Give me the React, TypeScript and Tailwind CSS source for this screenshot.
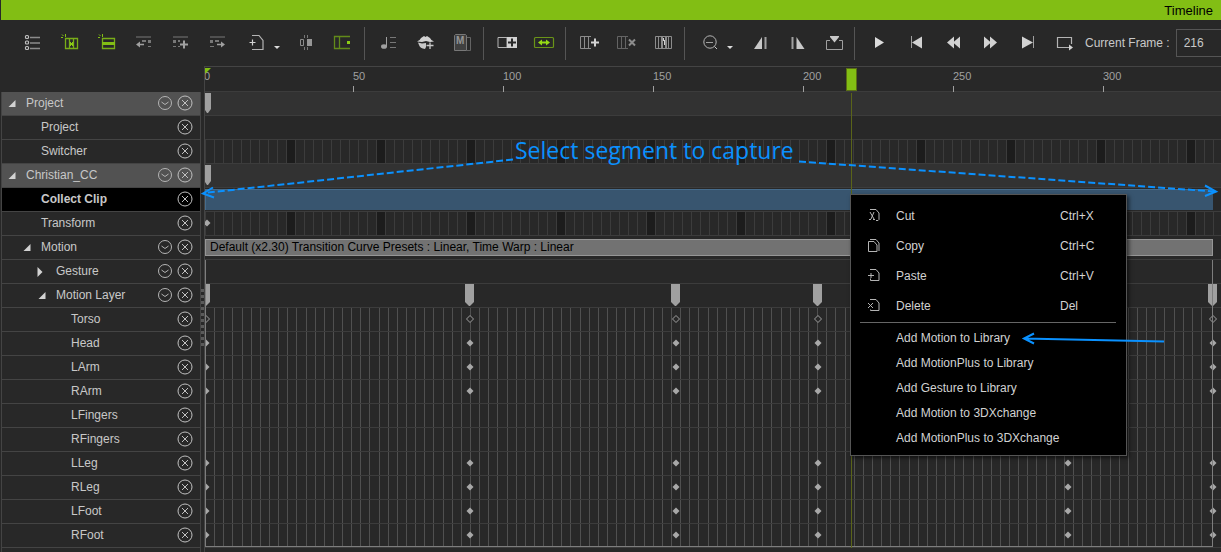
import { useState } from 'react';
import type { ReactNode } from 'react';

type TrackKind = 'header' | 'empty' | 'cells' | 'clip' | 'bar' | 'pins' | 'keys';

interface TrackRow {
  label: string;
  depth: number;
  kind: TrackKind;
  caret?: 'open' | 'closed';
  expandable?: boolean;
  selected?: boolean;
  keys?: number[];
  hollow?: boolean;
}

// Pixel offsets of the keyframes from the start of the track
const ARM_KEYS = [1, 265, 471, 613, 1008];
const LEG_KEYS = [1, 265, 471, 613, 863, 1008];

const ROWS: TrackRow[] = [
  { label: 'Project', depth: 0, kind: 'header', caret: 'open', expandable: true },
  { label: 'Project', depth: 1, kind: 'empty' },
  { label: 'Switcher', depth: 1, kind: 'cells' },
  { label: 'Christian_CC', depth: 0, kind: 'header', caret: 'open', expandable: true },
  { label: 'Collect Clip', depth: 1, kind: 'clip', selected: true },
  { label: 'Transform', depth: 1, kind: 'cells', keys: [2] },
  { label: 'Motion', depth: 1, kind: 'bar', caret: 'open', expandable: true },
  { label: 'Gesture', depth: 2, kind: 'empty', caret: 'closed', expandable: true },
  { label: 'Motion Layer', depth: 2, kind: 'pins', caret: 'open', expandable: true, keys: ARM_KEYS },
  { label: 'Torso', depth: 3, kind: 'keys', keys: ARM_KEYS, hollow: true },
  { label: 'Head', depth: 3, kind: 'keys', keys: ARM_KEYS },
  { label: 'LArm', depth: 3, kind: 'keys', keys: ARM_KEYS },
  { label: 'RArm', depth: 3, kind: 'keys', keys: ARM_KEYS },
  { label: 'LFingers', depth: 3, kind: 'keys' },
  { label: 'RFingers', depth: 3, kind: 'keys' },
  { label: 'LLeg', depth: 3, kind: 'keys', keys: LEG_KEYS },
  { label: 'RLeg', depth: 3, kind: 'keys', keys: LEG_KEYS },
  { label: 'LFoot', depth: 3, kind: 'keys', keys: LEG_KEYS },
  { label: 'RFoot', depth: 3, kind: 'keys', keys: LEG_KEYS },
];

const RULER_MARKS = [0, 50, 100, 150, 200, 250, 300];

const frameToX = (frame: number) => frame * 3 - 2;

function ToolButton({ label, children }: { label: string; children: ReactNode }) {
  return (
    <button aria-label={label} className="h-6 w-[37px] shrink-0">
      <svg width="37" height="24" viewBox="0 0 37 24" fill="none" stroke="none">
        {children}
      </svg>
    </button>
  );
}

function CaretButton({ label }: { label: string }) {
  return (
    <button aria-label={label} className="h-6 w-[14px] shrink-0">
      <svg width="14" height="24" viewBox="0 0 14 24">
        <path d="M1 15h6l-3 3z" fill="#dcdcdc" />
      </svg>
    </button>
  );
}

function Separator() {
  return (
    <div className="w-[8px] shrink-0 pl-[3px]">
      <div className="h-[33px] w-px bg-[#555]" />
    </div>
  );
}

function Toolbar() {
  const [frame, setFrame] = useState('216');

  return (
    <div className="ml-px flex h-[46px] items-center overflow-hidden pl-[13px]">
      <ToolButton label="Track list">
        <g stroke="#bebebe" strokeWidth="1.2">
          <rect x="11.5" y="4.5" width="3" height="3" rx="1" />
          <rect x="11.5" y="10" width="3" height="3" rx="1" />
          <rect x="11.5" y="15.5" width="3" height="3" rx="1" />
        </g>
        <path d="M16 6.500h10M16 12h10M16 17.500h10" stroke="#8c8c8c" strokeWidth="1.5" />
      </ToolButton>
      <ToolButton label="Show current track">
        <path d="M10 6.500h2M11 3.500l1.500 1.500M14.500 3v3" stroke="#82be14" />
        <path d="M14.500 7.500h12v10h-12zM18.500 8v10M22.500 8v10" stroke="#79ad18" strokeWidth="1.3" />
        <path d="M19 11h1v1h1v-1h1v4h-1v-1h-1v1h-1z" fill="#8ccc16" />
      </ToolButton>
      <ToolButton label="Show selected track">
        <path d="M10 6.500h2M11 3.500l1.500 1.500M14.500 3v3" stroke="#82be14" />
        <path d="M14.500 7.500h12v10h-12z" stroke="#79ad18" strokeWidth="1.3" />
        <path d="M14 11h13v3H14z" fill="#82be14" />
      </ToolButton>
      <ToolButton label="Previous key">
        <path d="M11 6h15" stroke="#787878" />
        <path d="M17 9h4v2h-4zM23 9h3v3h-3zM23 15h3v1h-3z" fill="#787878" />
        <path d="M13 13.500h6" stroke="#a0a0a0" strokeWidth="1.500" />
        <path d="M11 13.500l4-3v6z" fill="#a0a0a0" />
      </ToolButton>
      <ToolButton label="Add key">
        <path d="M11 6h15" stroke="#787878" />
        <path d="M11 9h3v3h-3zM16 9h2v2h-2zM11 15h3v1h-3zM16 15h2v1h-2z" fill="#787878" />
        <path d="M18 13.500h8M22 9.500v8" stroke="#a0a0a0" strokeWidth="2" />
      </ToolButton>
      <ToolButton label="Next key">
        <path d="M11 6h15" stroke="#787878" />
        <path d="M11 9h3v3h-3zM16 9h4v2h-4zM11 15h4v1h-4z" fill="#787878" />
        <path d="M18 13.500h6" stroke="#a0a0a0" strokeWidth="1.500" />
        <path d="M26 13.500l-4-3v6z" fill="#a0a0a0" />
      </ToolButton>
      <ToolButton label="Paste">
        <path d="M16 4.500h7l4 5v9H16" stroke="#b4b4b4" strokeWidth="1.2" />
        <path d="M13.500 11.500h6M16.500 8.500v6" stroke="#d2d2d2" strokeWidth="1.2" />
      </ToolButton>
      <CaretButton label="Paste options" />
      <ToolButton label="Align">
        <path d="M13.500 8.500h3v6h-3z" stroke="#8c8c8c" />
        <path d="M17.500 4v3M20.500 4v3M17.500 16v3M20.500 16v3" stroke="#787878" />
        <path d="M20 8h5v7h-5z" fill="#969696" />
      </ToolButton>
      <ToolButton label="Snap range">
        <path d="M26 5.500H10.500v12H26M15.500 5.500v12" stroke="#628a1a" strokeWidth="1.3" />
        <path d="M23 10h3v3h-3z" fill="#8ccc16" />
      </ToolButton>
      <Separator />
      <ToolButton label="Sound note">
        <path d="M17.500 6v10" stroke="#a0a0a0" />
        <ellipse cx="15" cy="15.500" rx="3" ry="2.300" fill="#a0a0a0" />
        <path d="M21 6.500h6M21 11.500h6M21 16.500h6" stroke="#787878" />
      </ToolButton>
      <ToolButton label="Lip sync">
        <path d="M11 10.500q3-1 4-3.500l3-2 1.500 1L21 5l3 2q1 2.500 4 3.500l-4 .5-4-1-4 1z" fill="#d2d2d2" />
        <path d="M12 11.500l4 1 4-.5v4l-1 2q-5-.5-6-4z" fill="#c8c8c8" />
        <path d="M20.500 14.500h7M24 11.500v6.500" stroke="#c8c8c8" strokeWidth="1.300" />
      </ToolButton>
      <ToolButton label="Motion">
        <path d="M11.500 4.500l1-1h10l1 1v15h-12z" fill="#404040" stroke="#787878" />
        <path d="M24 6.500h3.500v13H24" stroke="#646464" />
        <text x="13" y="13" fontSize="10" fontWeight="700" fontFamily="Liberation Sans, sans-serif" fill="#969696">M</text>
      </ToolButton>
      <Separator />
      <ToolButton label="Break clip">
        <path d="M10 6.500h9v10h-9z" stroke="#b4b4b4" />
        <path d="M19 6h10v11H19z" fill="#d2d2d2" />
        <path d="M20 11.500h8M24 7.500v8" stroke="#282828" strokeWidth="2" />
      </ToolButton>
      <ToolButton label="Stretch clip">
        <rect x="9.500" y="6.500" width="19" height="10" rx="1" stroke="#6a9418" strokeWidth="1.200" />
        <path d="M15 11.500h8" stroke="#96dc14" strokeWidth="2" />
        <path d="M13 11.500l4-3v6zM25 11.500l-4-3v6z" fill="#96dc14" />
      </ToolButton>
      <Separator />
      <ToolButton label="Insert frame">
        <path d="M21 5.500H10.500v12H21M14.500 5.500v12M18.500 5.500v12" stroke="#8c8c8c" />
        <path d="M21 11.500h8M25 7.500v8" stroke="#d2d2d2" strokeWidth="2" />
      </ToolButton>
      <ToolButton label="Delete frame">
        <path d="M21 5.500H10.500v12H21M14.500 5.500v12M18.500 5.500v12" stroke="#646464" />
        <path d="M22 8.500l6 6M28 8.500l-6 6" stroke="#8c8c8c" strokeWidth="2" />
      </ToolButton>
      <ToolButton label="Time warp">
        <path d="M11.500 5.500h16v12h-16zM14.500 6v11M24.500 6v11" stroke="#8c8c8c" />
        <path d="M17 6h2v11h-2zM21 6h2v11h-2z" fill="#8c8c8c" />
        <path d="M19.500 7v3M20.500 9v5" stroke="#d2d2d2" />
      </ToolButton>
      <Separator />
      <ToolButton label="Zoom out">
        <circle cx="21" cy="11" r="6.200" stroke="#b4b4b4" />
        <path d="M17 11.500h7" stroke="#a0a0a0" />
        <path d="M25.500 15.500l2.500 2.500" stroke="#c8c8c8" />
      </ToolButton>
      <CaretButton label="Zoom options" />
      <ToolButton label="Set start">
        <path d="M14 18l8-12v12z" fill="#c8c8c8" />
        <path d="M25.500 6v12" stroke="#a0a0a0" strokeWidth="2" />
      </ToolButton>
      <ToolButton label="Set end">
        <path d="M27.500 18L19.500 6v12z" fill="#c8c8c8" />
        <path d="M15.500 6v12" stroke="#a0a0a0" strokeWidth="2" />
      </ToolButton>
      <ToolButton label="Fit range">
        <path d="M16 9.500h-3.500v9h16v-9H25" stroke="#a0a0a0" />
        <path d="M16 5h9v1l-4.500 5.500L16 6z" fill="#c8c8c8" />
      </ToolButton>
      <Separator />
      <ToolButton label="Play">
        <path d="M16 6l9 5.500-9 5.500z" fill="#dcdcdc" />
      </ToolButton>
      <ToolButton label="First frame">
        <path d="M15.500 5v12" stroke="#a0a0a0" />
        <path d="M26 5.500L16 11.500l10 6z" fill="#d2d2d2" />
      </ToolButton>
      <ToolButton label="Previous frame">
        <path d="M21 5.500l-7 6 7 6zM27 5.500l-7 6 7 6z" fill="#d2d2d2" />
      </ToolButton>
      <ToolButton label="Next frame">
        <path d="M14 5.500l7 6-7 6zM20 5.500l7 6-7 6z" fill="#d2d2d2" />
      </ToolButton>
      <ToolButton label="Last frame">
        <path d="M26.500 5v12" stroke="#a0a0a0" />
        <path d="M15 5.500l11 6-11 6z" fill="#d2d2d2" />
      </ToolButton>
      <ToolButton label="Loop">
        <path d="M25 16.500H13.500v-10h14V13" stroke="#b4b4b4" strokeWidth="1.200" />
        <path d="M25 13.500l4 3-4 3z" fill="#d2d2d2" />
      </ToolButton>
      <label htmlFor="current-frame" className="ml-1 shrink-0 whitespace-nowrap">
        Current Frame :
      </label>
      <input
        id="current-frame"
        className="ml-[6px] h-[28px] w-[64px] shrink-0 border border-[#555] bg-transparent px-[7px] outline-none"
        value={frame}
        onChange={(e) => setFrame(e.target.value)}
      />
    </div>
  );
}

function RowLabel({ row }: { row: TrackRow }) {
  const getIndent = () => {
    switch (row.depth) {
      case 0: return 'pl-[5px]';
      case 1: return 'pl-[20px]';
      case 2: return 'pl-[35px]';
      default: return 'pl-[50px]';
    }
  };

  const getColor = () => {
    if (row.selected) return 'bg-black font-bold';
    if (row.kind === 'header') return 'bg-[#525252]';
    return '';
  };

  return (
    <li className={`flex h-6 items-center border-b border-[#444] pr-[7px] ${getIndent()} ${getColor()}`}>
      <svg width="12" height="12" viewBox="0 0 12 12" className="mr-[7px] shrink-0" fill="#d2d2d2">
        {row.caret === 'open' && <path d="M8.500 2v7H1.500z" />}
        {row.caret === 'closed' && <path d="M.5 1l5 5-5 5z" />}
      </svg>
      <span className="flex-1 pb-px leading-4">{row.label}</span>
      {row.expandable && (
        <button aria-label={`Track options of ${row.label}`} className="mr-[5px]">
          <svg width="15" height="15" viewBox="0 0 15 15" fill="none" stroke="#b4b4b4">
            <circle cx="7" cy="7" r="6.500" />
            <path d="M3.500 6l3.500 2.500L10.500 6" />
          </svg>
        </button>
      )}
      <button aria-label={`Close ${row.label}`}>
        <svg width="15" height="15" viewBox="0 0 15 15" fill="none" stroke="#c0c0c0" className="overflow-visible">
          <circle cx="7" cy="7" r="7" />
          <path d="M4 4l6 6M10 4l-6 6" />
        </svg>
      </button>
    </li>
  );
}

function Diamond({ x, hollow }: { x: number; hollow?: boolean }) {
  return (
    <path
      transform={`translate(${x} 11)`}
      d="M-3.500 0L0-3.500 3.500 0 0 3.500z"
      fill={hollow ? '#282828' : '#a8a8a8'}
      stroke={hollow ? '#a0a0a0' : 'none'}
    />
  );
}

function Track({ row }: { row: TrackRow }) {
  if (row.kind === 'clip') {
    return (
      <div className="h-6 border-b border-[#3c3c3c] pt-px">
        <div className="mr-2 h-[21px] border-t border-l border-[#466c8c] bg-[#38556f]" />
      </div>
    );
  }

  if (row.kind === 'bar') {
    return (
      <div className="flex h-6 items-center border-b border-[#3c3c3c]">
        <div className="mr-2 h-[17px] flex-1 overflow-hidden border border-[#969696] bg-[#727272] pl-1 leading-[14px] whitespace-nowrap text-black">
          Default (x2.30) Transition Curve Presets : Linear, Time Warp : Linear
        </div>
      </div>
    );
  }

  if (row.kind === 'cells') {
    return (
      <div className="h-6 border-b border-[#3c3c3c]">
        <div className="mr-[7px] h-[23px] bg-[repeating-linear-gradient(to_right,#3c3c3c_0_1px,transparent_1px_9px),repeating-linear-gradient(to_right,transparent_0_82px,#1c1c1c_82px_90px)]">
          <svg width="100%" height="23" className="block">
            {row.keys?.map((x) => <Diamond key={x} x={x} />)}
          </svg>
        </div>
      </div>
    );
  }

  if (row.kind === 'header') {
    return (
      <div className="h-6 border-b border-[#3c3c3c] bg-[#323232]">
        <svg width="100%" height="23" className="block">
          <path d="M0 1h6v16l-3 4H2l-2-3z" fill="#a0a0a0" />
        </svg>
      </div>
    );
  }

  return (
    <div className="h-6 border-b border-[#3c3c3c]">
      <svg width="100%" height="23" className="block">
        {row.kind === 'keys' &&
          Array.from({ length: 110 }, (_, i) => (
            <rect key={i} x={Math.round(i * 9.137)} y="0" width="1" height="23" fill="#505050" />
          ))}
        {row.kind === 'pins' &&
          row.keys?.map((x) => (
            <path key={x} transform={`translate(${x} 0)`} d="M-5 0h9v18l-4 4h-1l-4-4z" fill="#a0a0a0" />
          ))}
        {row.kind === 'keys' && row.keys?.map((x) => <Diamond key={x} x={x} hollow={row.hollow} />)}
      </svg>
    </div>
  );
}

function Ruler() {
  return (
    <div className="relative h-[26px] overflow-hidden border-t border-[#444] text-[11px] leading-3 text-[#a0a0a0]">
      {RULER_MARKS.map((mark) => (
        <div
          key={mark}
          className="absolute top-[3px] flex h-[22px] flex-col justify-between"
          style={{ left: Math.max(frameToX(mark), -1) }}
        >
          <span>{mark}</span>
          {mark > 0 && <i className="block h-[6px] w-px bg-[#a0a0a0]" />}
        </div>
      ))}
      <svg className="absolute top-px left-0" width="6" height="5">
        <path d="M0 0h6L1 5H0z" fill="#82be14" />
      </svg>
    </div>
  );
}

const MENU_EDIT = [
  {
    label: 'Cut',
    shortcut: 'Ctrl+X',
    icon: <path d="M3 2.500h6l3 3.500v6.500l-1 1H9M3 5l4 7M7 5l-3 7M2 12.500h2M6 12.500h2" />,
  },
  {
    label: 'Copy',
    shortcut: 'Ctrl+C',
    icon: <path d="M1.500 4.500H7l3 3.500v6.500H1.500zM3 2.500h6l3 3.500v8" />,
  },
  {
    label: 'Paste',
    shortcut: 'Ctrl+V',
    icon: <path d="M3 2.500h6l3 3.500v7.500H3.500v-2M1 8.500h6M4 6v5" />,
  },
  {
    label: 'Delete',
    shortcut: 'Del',
    icon: <path d="M3 2.500h6l3 3.500v7.500H3.500v-1M1 6l5 5M6 6l-5 5" />,
  },
];

const MENU_LIBRARY = [
  'Add Motion to Library',
  'Add MotionPlus to Library',
  'Add Gesture to Library',
  'Add Motion to 3DXchange',
  'Add MotionPlus to 3DXchange',
];

function ContextMenu() {
  return (
    <div
      role="menu"
      className="absolute top-[194px] left-[850px] w-[277px] border border-[#555] bg-black py-[5px] text-[#d2d2d2] shadow-[2px_2px_4px_rgba(0,0,0,0.6)]"
    >
      {MENU_EDIT.map((item) => (
        <button key={item.label} role="menuitem" className="flex h-[30px] w-full items-center pl-4 text-left">
          <svg width="14" height="15" viewBox="0 1 14 15" fill="none" stroke="#b4b4b4">
            {item.icon}
          </svg>
          <span className="ml-[15px] w-[164px] pt-[2px]">{item.label}</span>
          <span className="pt-[2px]">{item.shortcut}</span>
        </button>
      ))}
      <hr className="mr-[10px] ml-[9px] my-[2px] border-[#666]" />
      {MENU_LIBRARY.map((label) => (
        <button key={label} role="menuitem" className="block h-[25px] w-full pl-[45px] text-left">
          {label}
        </button>
      ))}
    </div>
  );
}

function Annotations() {
  return (
    <div className="pointer-events-none absolute inset-0 overflow-hidden text-[#0a91ff]">
      <svg width="1221" height="552" fill="none" stroke="#0a91ff" strokeWidth="2">
        <path d="M513 159.500L204 193M799 161.500L1214 191.500" strokeDasharray="7 3" />
        <path d="M213 187.500L203 193.500l11 4M1205 185.500l11 6-11 4.500" />
        <path d="M1164 341.500L1024 338.500M1034 333.500l-10 5 10 5" />
      </svg>
      <p className="absolute top-[134px] left-[515px] font-['Open_Sans',sans-serif] text-[23px] leading-8 font-medium whitespace-nowrap">
        Select segment to capture
      </p>
    </div>
  );
}

export default function App() {
  return (
    <div className="relative flex min-h-screen flex-col overflow-hidden bg-[#282828] font-['Liberation_Sans',Arial,sans-serif] text-[12px] text-[#c8c8c8]">
      <header className="ml-px h-5 bg-[#82be14] pr-2 text-right text-[13px] leading-[21px] text-black">
        <h1>Timeline</h1>
      </header>
      <Toolbar />

      <main className="flex flex-1">
        <div className="ml-px flex w-[200px] shrink-0 flex-col pt-[26px]">
          <ul className="flex-1 border-x border-[#444] shadow-[inset_0_1px_0_#444]">
            {ROWS.map((row, index) => (
              <RowLabel key={index} row={row} />
            ))}
          </ul>
        </div>

        {/* Splitter grip */}
        <div className="w-[3px] shrink-0 pt-[223px]">
          <div className="h-[58px] bg-[repeating-linear-gradient(to_bottom,#5a5a5a_0_3px,transparent_3px_6px)]" />
        </div>

        <div className="relative min-w-0 flex-1 border-l border-[#444]">
          <Ruler />
          <div className="shadow-[0_-1px_0_#3c3c3c]">
            {ROWS.slice(0, 7).map((row, index) => (
              <Track key={index} row={row} />
            ))}
          </div>
          <div className="relative">
            {ROWS.slice(7).map((row, index) => (
              <Track key={index} row={row} />
            ))}
            <div className="pointer-events-none absolute top-0 right-2 bottom-px left-0 border-x border-b border-[#7d7d7d]" />
          </div>
          <div className="absolute top-[2px] flex h-[480px] w-[11px] flex-col items-center" style={{ left: frameToX(216) - 5 }}>
            <div className="h-[23px] w-[11px] border border-[#5a6e14] bg-[#82be14]" />
            <div className="mt-[2px] w-px flex-1 bg-[#5a6419]" />
          </div>
        </div>
      </main>

      <ContextMenu />
      <Annotations />
    </div>
  );
}
